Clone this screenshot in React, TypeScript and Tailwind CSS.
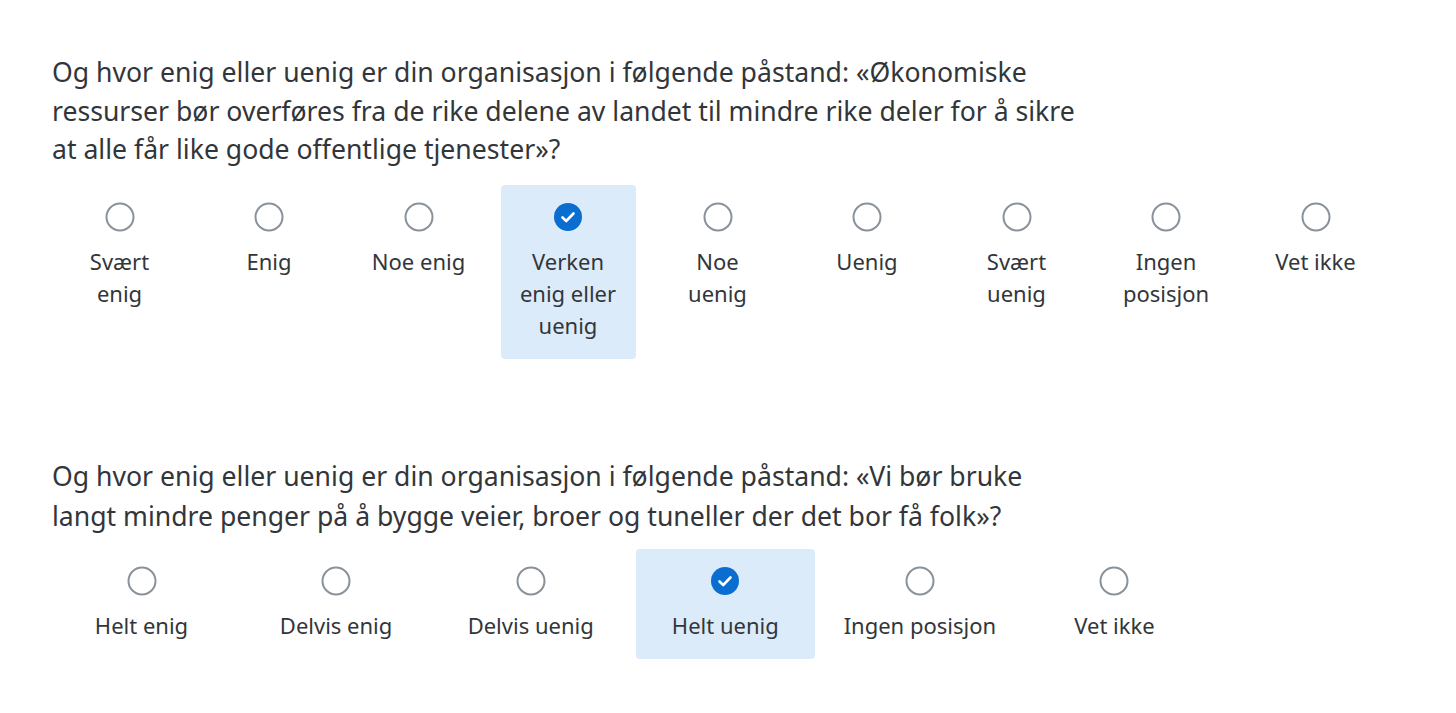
import React from 'react';

const font = { fontFamily: '"Noto Sans", "Open Sans", Arial, sans-serif' };

function Radio({ checked }: { checked?: boolean }) {
  if (checked) {
    return (
      <svg width="30" height="30" viewBox="0 0 30 30">
        <circle cx="15" cy="15" r="14" fill="#0a6ed1" />
        <path d="M9.5 15.5 L13.2 19 L20.5 11.5" fill="none" stroke="#fff" strokeWidth="2.6" strokeLinecap="round" strokeLinejoin="round" />
      </svg>
    );
  }
  return (
    <svg width="30" height="30" viewBox="0 0 30 30">
      <circle cx="15" cy="15" r="13.5" fill="none" stroke="#89919a" strokeWidth="2" />
    </svg>
  );
}

type Opt = { label: React.ReactNode; checked?: boolean };

function Scale({ options, colW, gap }: { options: Opt[]; colW: string; gap: string }) {
  return (
    <div className={`flex ${gap}`}>
      {options.map((o, i) => (
        <div
          key={i}
          className={`${colW} flex flex-col items-center pt-[17px] pb-[18px] rounded-[4px] ${o.checked ? 'bg-[#dcebfa]' : ''}`}
        >
          <Radio checked={o.checked} />
          <div className="mt-[13px] text-[22px] leading-[32px] text-[#32363a] text-center">{o.label}</div>
        </div>
      ))}
    </div>
  );
}

export default function App() {
  const q1: Opt[] = [
    { label: <>Svært<br />enig</> },
    { label: 'Enig' },
    { label: 'Noe enig' },
    { label: <>Verken<br />enig eller<br />uenig</>, checked: true },
    { label: <>Noe<br />uenig</> },
    { label: 'Uenig' },
    { label: <>Svært<br />uenig</> },
    { label: <>Ingen<br />posisjon</> },
    { label: 'Vet ikke' },
  ];
  const q2: Opt[] = [
    { label: 'Helt enig' },
    { label: 'Delvis enig' },
    { label: 'Delvis uenig' },
    { label: 'Helt uenig', checked: true },
    { label: 'Ingen posisjon' },
    { label: 'Vet ikke' },
  ];

  return (
    <div className="min-h-screen bg-white pl-[52px] pt-[53px]" style={font}>
      <p className="text-[26.6px] leading-[38.5px] text-[#32363a]">
        Og hvor enig eller uenig er din organisasjon i følgende påstand: «Økonomiske<br />
        ressurser bør overføres fra de rike delene av landet til mindre rike deler for å sikre<br />
        at alle får like gode offentlige tjenester»?
      </p>
      <div className="mt-[16px]">
        <Scale options={q1} colW="w-[135px]" gap="gap-[14.5px]" />
      </div>

      <p className="mt-[97px] text-[26.6px] leading-[40px] text-[#32363a]">
        Og hvor enig eller uenig er din organisasjon i følgende påstand: «Vi bør bruke<br />
        langt mindre penger på å bygge veier, broer og tuneller der det bor få folk»?
      </p>
      <div className="mt-[13px]">
        <Scale options={q2} colW="w-[179px]" gap="gap-[15.6px]" />
      </div>
    </div>
  );
}
